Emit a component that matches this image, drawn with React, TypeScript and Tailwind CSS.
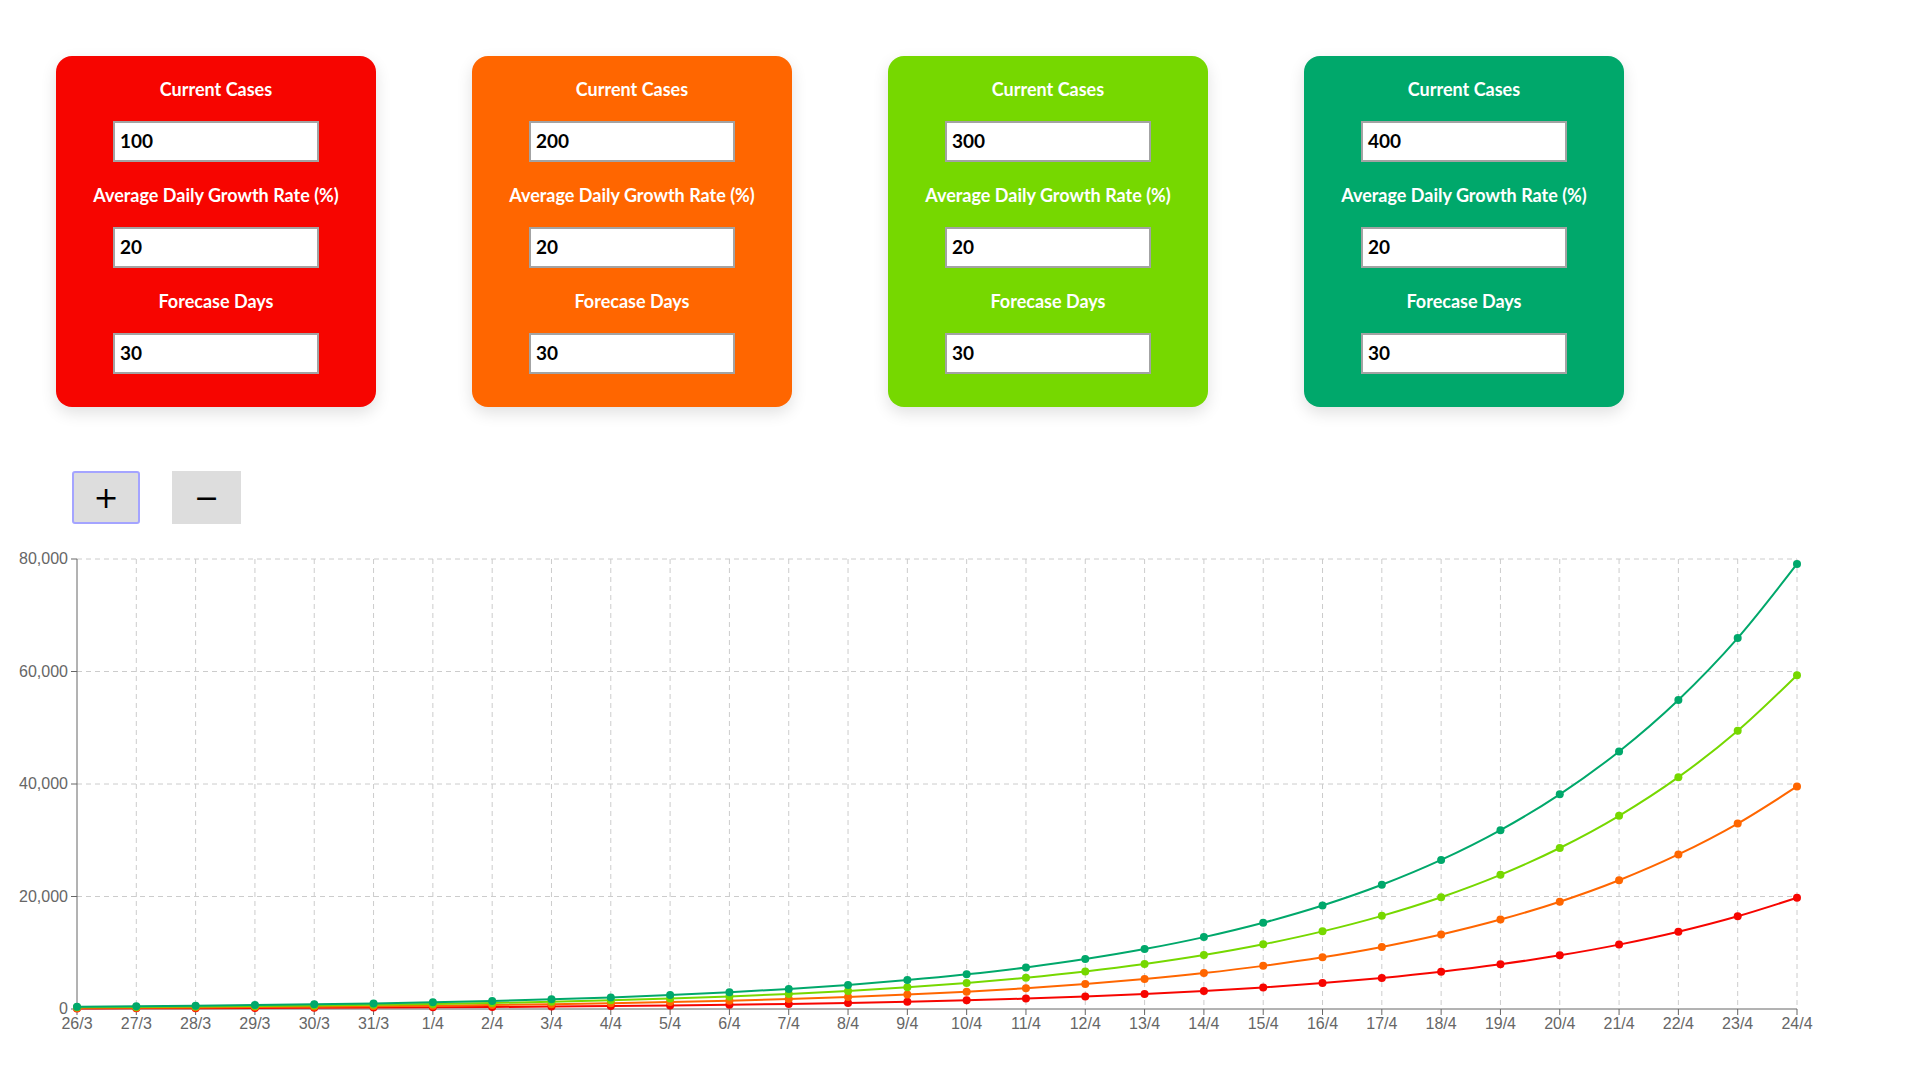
import React from "react";

interface Series {
  start: number;
  color: string;
}

const cards: Series[] = [
  { start: 100, color: "#f70500" },
  { start: 200, color: "#ff6600" },
  { start: 300, color: "#76d800" },
  { start: 400, color: "#00a86b" },
];

const cardBg = ["bg-[#f70500]", "bg-[#ff6600]", "bg-[#76d800]", "bg-[#00a86b]"];

const RATE = 20;
const DAYS = 30;

const dates: string[] = [];
for (let i = 0; i < DAYS; i++) {
  const d = new Date(2020, 2, 26 + i);
  dates.push(`${d.getDate()}/${d.getMonth() + 1}`);
}

// chart geometry (svg coords)
const X0 = 77;
const X1 = 1797;
const Y0 = 485;
const YTOP = 35;
const MAX = 80000;
const sx = (i: number) => X0 + (i * (X1 - X0)) / (DAYS - 1);
const sy = (v: number) => Y0 - (v / MAX) * (Y0 - YTOP);

// d3 style monotoneX curve
function monotonePath(pts: [number, number][]) {
  const n = pts.length;
  const sign = (x: number) => (x < 0 ? -1 : 1);
  const t: number[] = new Array(n).fill(0);
  for (let i = 1; i < n - 1; i++) {
    const [x0, y0] = pts[i - 1];
    const [x1, y1] = pts[i];
    const [x2, y2] = pts[i + 1];
    const h0 = x1 - x0;
    const h1 = x2 - x1;
    const s0 = (y1 - y0) / h0;
    const s1 = (y2 - y1) / h1;
    const p = (s0 * h1 + s1 * h0) / (h0 + h1);
    t[i] = (sign(s0) + sign(s1)) * Math.min(Math.abs(s0), Math.abs(s1), 0.5 * Math.abs(p)) || 0;
  }
  const s = (a: number, b: number) => (pts[b][1] - pts[a][1]) / (pts[b][0] - pts[a][0]);
  t[0] = (3 * s(0, 1) - t[1]) / 2;
  t[n - 1] = (3 * s(n - 2, n - 1) - t[n - 2]) / 2;
  let d = `M${pts[0][0]},${pts[0][1]}`;
  for (let i = 0; i < n - 1; i++) {
    const [x0, y0] = pts[i];
    const [x1, y1] = pts[i + 1];
    const dx = (x1 - x0) / 3;
    d += `C${x0 + dx},${y0 + dx * t[i]},${x1 - dx},${y1 - dx * t[i + 1]},${x1},${y1}`;
  }
  return d;
}

function Field({ label, value }: { label: string; value: number }) {
  return (
    <>
      <div className="text-[18px] leading-6 font-bold text-white mb-5">{label}</div>
      <div className="w-[206px] h-[41px] mb-[21px] bg-white border-2 border-[#a3a3a3] flex items-center pl-[5px] text-[19px] font-bold text-black">
        {value}
      </div>
    </>
  );
}

function Chart() {
  const yTicks = [0, 20000, 40000, 60000, 80000];
  return (
    <svg width="1920" height="540" className="block" style={{ fontFamily: '"Liberation Sans", Arial, sans-serif' }}>
      {/* grid */}
      <g stroke="#cccccc" strokeDasharray="5 4" strokeWidth="1">
        {yTicks.slice(1).map((v) => (
          <line key={v} x1={X0} x2={X1} y1={sy(v)} y2={sy(v)} />
        ))}
        {dates.map((_, i) =>
          i === 0 ? null : <line key={i} x1={sx(i)} x2={sx(i)} y1={YTOP} y2={Y0} />
        )}
      </g>
      {/* axes */}
      <g stroke="#666666" strokeWidth="1">
        <line x1={X0} x2={X0} y1={YTOP} y2={Y0} />
        <line x1={X0} x2={X1} y1={Y0} y2={Y0} />
        {yTicks.map((v) => (
          <line key={v} x1={X0 - 6} x2={X0} y1={sy(v)} y2={sy(v)} />
        ))}
        {dates.map((_, i) => (
          <line key={i} x1={sx(i)} x2={sx(i)} y1={Y0} y2={Y0 + 6} />
        ))}
      </g>
      <g fill="#666666" fontSize="16">
        {yTicks.map((v) => (
          <text key={v} x={X0 - 9} y={sy(v) + 5} textAnchor="end">
            {v.toLocaleString("en-US")}
          </text>
        ))}
        {dates.map((d, i) => (
          <text key={d} x={sx(i)} y={Y0 + 20} textAnchor="middle">
            {d}
          </text>
        ))}
      </g>
      {/* lines */}
      {cards.map((c) => {
        const pts: [number, number][] = dates.map((_, i) => [
          sx(i),
          sy(c.start * Math.pow(1 + RATE / 100, i)),
        ]);
        return (
          <g key={c.color}>
            <path d={monotonePath(pts)} fill="none" stroke={c.color} strokeWidth="2" />
            {pts.map(([x, y], i) => (
              <circle key={i} cx={x} cy={y} r="4" fill={c.color} />
            ))}
          </g>
        );
      })}
    </svg>
  );
}

export default function App() {
  return (
    <div className="min-h-screen w-[1920px] bg-white pt-14" style={{ fontFamily: 'Lato, "Open Sans", sans-serif' }}>
      {/* Input cards */}
      <div className="flex gap-24 pl-14">
        {cards.map((c, i) => (
          <div
            key={c.color}
            className={`w-[320px] h-[351px] rounded-2xl ${cardBg[i]} shadow-[0_6px_16px_rgba(0,0,0,0.12)] flex flex-col items-center pt-[21px]`}
          >
            <Field label="Current Cases" value={c.start} />
            <Field label="Average Daily Growth Rate (%)" value={RATE} />
            <Field label="Forecase Days" value={DAYS} />
          </div>
        ))}
      </div>

      {/* Add / remove */}
      <div className="flex gap-8 pl-[72px] mt-16" style={{ fontFamily: '"DejaVu Sans", sans-serif' }}>
        <button className="w-[68px] h-[53px] bg-[#dddddd] border-2 border-[#a4a4ff] rounded-[3px] text-[30px] leading-none text-black flex items-center justify-center">
          +
        </button>
        <button className="w-[69px] h-[53px] bg-[#dddddd] text-[30px] leading-none text-black flex items-center justify-center">
          −
        </button>
      </div>

      <Chart />
    </div>
  );
}
